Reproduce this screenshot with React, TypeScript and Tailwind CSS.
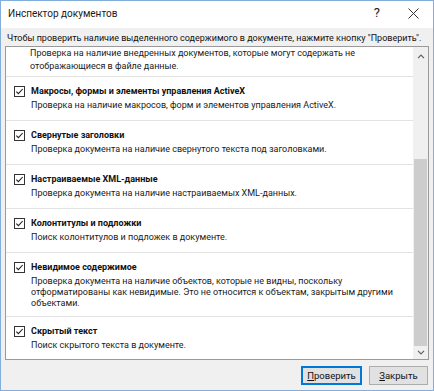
import React from 'react';

type Item = { title: string; desc: string[] };

const items: Item[] = [
  {
    title: 'Макросы, формы и элементы управления ActiveX',
    desc: ['Проверка на наличие макросов, форм и элементов управления ActiveX.'],
  },
  {
    title: 'Свернутые заголовки',
    desc: ['Проверка документа на наличие свернутого текста под заголовками.'],
  },
  {
    title: 'Настраиваемые XML-данные',
    desc: ['Проверка документа на наличие настраиваемых XML-данных.'],
  },
  {
    title: 'Колонтитулы и подложки',
    desc: ['Поиск колонтитулов и подложек в документе.'],
  },
  {
    title: 'Невидимое содержимое',
    desc: [
      'Проверка документа на наличие объектов, которые не видны, поскольку',
      'отформатированы как невидимые. Это не относится к объектам, закрытым другими',
      'объектами.',
    ],
  },
  {
    title: 'Скрытый текст',
    desc: ['Поиск скрытого текста в документе.'],
  },
];

const CheckBox = () => (
  <svg width="11" height="11" viewBox="0 0 11 11" className="shrink-0">
    <rect x="0.5" y="0.5" width="10" height="10" fill="#fff" stroke="#333" />
    <path d="M2.3 5.6 L4.4 7.7 L8.7 3" fill="none" stroke="#222" strokeWidth="1.1" />
  </svg>
);

const Row = ({ item }: { item: Item }) => (
  <div
    className={
      'border-t border-[#e3e3e3] pt-[8px] pl-[8px] flex gap-[6px] ' +
      (item.desc.length > 1 ? 'pb-[7px]' : 'pb-[9px]')
    }
  >
    <div className="pt-[1px]">
      <CheckBox />
    </div>
    <div className="flex flex-col">
      <div className="font-bold text-[9px] leading-[13px] text-[#111]">{item.title}</div>
      <div className="mt-[2px] text-[9px] leading-[11px] text-[#1a1a1a] whitespace-nowrap">
        {item.desc.map((d) => (
          <div key={d}>{d}</div>
        ))}
      </div>
    </div>
  </div>
);

const Chevron = ({ up }: { up?: boolean }) => (
  <svg width="8" height="5" viewBox="0 0 8 5">
    <path
      d={up ? 'M1 4.2 L4 1.2 L7 4.2' : 'M1 0.8 L4 3.8 L7 0.8'}
      fill="none"
      stroke="#606060"
      strokeWidth="1.2"
    />
  </svg>
);

export default function App() {
  return (
    <div
      className="w-[434px] h-[391px] bg-[#f0f0f0] border border-[#83aedb] flex flex-col text-[#000]"
      style={{ fontFamily: 'Roboto, "Noto Sans", sans-serif' }}
    >
      <div className="h-[27px] bg-white flex items-center pl-[7px] pr-[14px] pb-[3px] justify-between">
        <span className="text-[10px] text-[#1a1a1a]">Инспектор документов</span>
        <div className="flex items-center gap-[28px] text-[#222]">
          <span className="text-[13px]">?</span>
          <svg width="11" height="11" viewBox="0 0 11 11">
            <path d="M0.5 0.5 L10.5 10.5 M10.5 0.5 L0.5 10.5" stroke="#333" strokeWidth="1" />
          </svg>
        </div>
      </div>
      <div className="px-[6px] pt-[4px] h-[18px] text-[9px] leading-[13px] whitespace-nowrap text-[#111]">
        Чтобы проверить наличие выделенного содержимого в документе, нажмите кнопку "Проверить".
      </div>
      <div className="mx-[4px] h-[314px] border border-[#9a9a9a] bg-white flex">
        <div className="flex-1 overflow-hidden">
          <div className="pl-[24px] pb-[3px] text-[9px] leading-[13px] text-[#1a1a1a]">
            <div>Проверка на наличие внедренных документов, которые могут содержать не</div>
            <div>отображающиеся в файле данные.</div>
          </div>
          {items.map((it) => (
            <Row key={it.title} item={it} />
          ))}
        </div>
        <div className="w-[15px] bg-[#f0f0f0] flex flex-col items-center">
          <div className="h-[18px] flex items-center justify-center">
            <Chevron up />
          </div>
          <div className="flex-1 w-full flex flex-col px-[1px]">
            <div className="h-[94px]" />
            <div className="flex-1 bg-[#cdcdcd]" />
          </div>
          <div className="h-[13px] flex items-center justify-center">
            <Chevron />
          </div>
        </div>
      </div>
      <div className="flex justify-end gap-[7px] pr-[5px] pt-[6px]">
        <button className="w-[61px] h-[19px] bg-[#e1e1e1] border border-[#0078d7] shadow-[inset_0_0_0_1px_#0078d7] text-[9.5px] leading-none text-[#111]">
          <span className="underline">П</span>роверить
        </button>
        <button className="w-[59px] h-[19px] bg-[#e1e1e1] border border-[#adadad] text-[9.5px] leading-none text-[#111]">
          <span className="underline">З</span>акрыть
        </button>
      </div>
    </div>
  );
}
